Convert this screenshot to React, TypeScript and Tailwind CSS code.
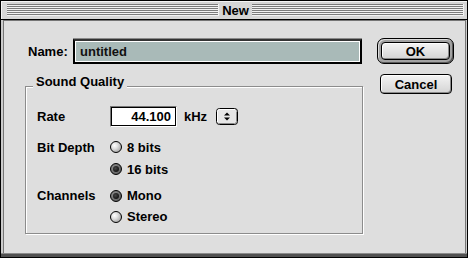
const font = { fontFamily: '"Liberation Sans", Arial, sans-serif' }

function Stripes() {
	return <div className="flex-1 h-[12px] bg-[repeating-linear-gradient(to_bottom,#7b7b7b_0px,#7b7b7b_1px,#f2f2f2_1px,#f2f2f2_2px)] border-r border-b border-[#f2f2f2]"></div>
}

function Radio({ on, label }: { on?: boolean; label: string }) {
	return (
		<div className="flex items-center h-full">
			{on ? (
				<div className="w-[12px] h-[12px] rounded-full border border-black bg-[radial-gradient(circle_at_40%_40%,#9a9a9a,#4a4a4a)] flex items-center justify-center">
					<div className="w-[6px] h-[6px] rounded-full bg-[radial-gradient(circle_at_40%_40%,#444,#000)]"></div>
				</div>
			) : (
				<div className="w-[12px] h-[12px] rounded-full border border-black bg-[radial-gradient(circle_at_35%_35%,#ffffff_0%,#e0e0e0_35%,#8c8c8c_100%)]"></div>
			)}
			<span className="ml-[5px] text-[13px] font-bold leading-[13px] text-black">{label}</span>
		</div>
	)
}

function Button({ children, className }: { children: React.ReactNode; className?: string }) {
	return (
		<div className={"flex items-center justify-center rounded-[4px] border border-black bg-[linear-gradient(to_bottom,#f4f4f4,#d4d4d4)] shadow-[inset_1px_1px_0_#ffffff,inset_-1px_-1px_0_#8a8a8a] text-[13px] font-bold leading-[13px] text-black " + (className || '')}>
			{children}
		</div>
	)
}

export default function App() {
	return (
		<div style={font} className="w-[468px] h-[258px] border border-black bg-[#dedede] flex flex-col overflow-hidden">
			{/* title bar */}
			<div className="h-[19px] flex items-center bg-[#d6d6d6] border-b border-black pl-[6px] pr-[3px] shadow-[inset_1px_1px_0_#f4f4f4]">
				<Stripes />
				<div className="w-[33px] text-center text-[13px] font-bold leading-[13px] text-black">New</div>
				<Stripes />
			</div>

			{/* window frame */}
			<div className="flex-1 flex bg-[#cbcbcb] pl-[2px] pr-[1px]">
				<div className="flex-1 flex items-start bg-[#dedede] border-l border-r border-t border-[#767676] pl-[21px] pt-[17px]">
					{/* left column */}
					<div className="mt-[1px] w-[338px] flex flex-col">
						<div className="flex items-center h-[25px]">
							<div className="w-[48px] pl-[3px] text-[13px] font-bold leading-[13px] text-black">Name:</div>
							<div className="w-[289px] h-[25px] border-2 border-black border-t-[#333] shadow-[0_-1px_0_#8a8a8a] p-[1px] bg-white">
								<div className="h-full bg-[#a9bab8] flex items-center pl-[4px] text-[13px] font-bold leading-[13px] text-[#111]">untitled</div>
							</div>
						</div>

						{/* group box */}
						<div className="relative mt-[22px] h-[148px] border border-[#8c8c8c] shadow-[1px_1px_0_#ffffff,inset_1px_1px_0_#ffffff] pl-[11px]">
							<span className="absolute left-[7px] top-[-12px] px-[3px] bg-[#dedede] text-[13px] font-bold leading-[13px] text-black">Sound Quality</span>

							<div className="flex items-center h-[21px] mt-[19px]">
								<div className="w-[73px] text-[13px] font-bold leading-[13px] text-black">Rate</div>
								<div className="w-[67px] h-[21px] border border-t-[#777] border-l-[#777] border-b-white border-r-white">
									<div className="h-full border border-black bg-white flex items-center justify-end pr-[4px] text-[13px] font-bold leading-[13px] text-black">44.100</div>
								</div>
								<div className="ml-[7px] text-[13px] font-bold leading-[13px] text-black">kHz</div>
								<svg width="22" height="17" viewBox="0 0 22 17" className="ml-[9px]">
									<rect x="0.5" y="0.5" width="21" height="16" rx="3" fill="#e6e6e6" stroke="#000" />
									<path d="M1.5 14 L1.5 3.5 Q1.5 1.5 3.5 1.5 L19 1.5" stroke="#fff" fill="none" />
									<path d="M20.5 3.5 L20.5 13.5 Q20.5 15.5 18.5 15.5 L3 15.5" stroke="#8a8a8a" fill="none" />
									<polygon points="8,7.5 14,7.5 11,4.5" fill="#000" />
									<polygon points="8,9.5 14,9.5 11,12.5" fill="#000" />
								</svg>
							</div>

							<div className="flex items-start mt-[9px]">
								<div className="w-[73px] h-[22px] flex items-center text-[13px] font-bold leading-[13px] text-black">Bit Depth</div>
								<div className="flex flex-col">
									<div className="h-[22px]"><Radio label="8 bits" /></div>
									<div className="h-[22px]"><Radio on label="16 bits" /></div>
								</div>
							</div>

							<div className="flex items-start mt-[5px]">
								<div className="w-[73px] h-[21px] flex items-center text-[13px] font-bold leading-[13px] text-black">Channels</div>
								<div className="flex flex-col">
									<div className="h-[21px]"><Radio on label="Mono" /></div>
									<div className="h-[21px]"><Radio label="Stereo" /></div>
								</div>
							</div>
						</div>
					</div>

					{/* buttons */}
					<div className="ml-[14px] flex flex-col">
						<div className="w-[77px] h-[26px] rounded-[7px] border border-black bg-[#a2a2a2] shadow-[inset_1px_1px_0_#dcdcdc,inset_-1px_-1px_0_#5a5a5a] p-[3px]">
							<Button className="w-full h-full">OK</Button>
						</div>
						<Button className="ml-[3px] mt-[10px] w-[72px] h-[20px]">Cancel</Button>
					</div>
				</div>
			</div>

			{/* bottom frame */}
			<div className="h-[4px] bg-[#505050] border-t border-[#8a8a8a]"></div>
		</div>
	)
}
